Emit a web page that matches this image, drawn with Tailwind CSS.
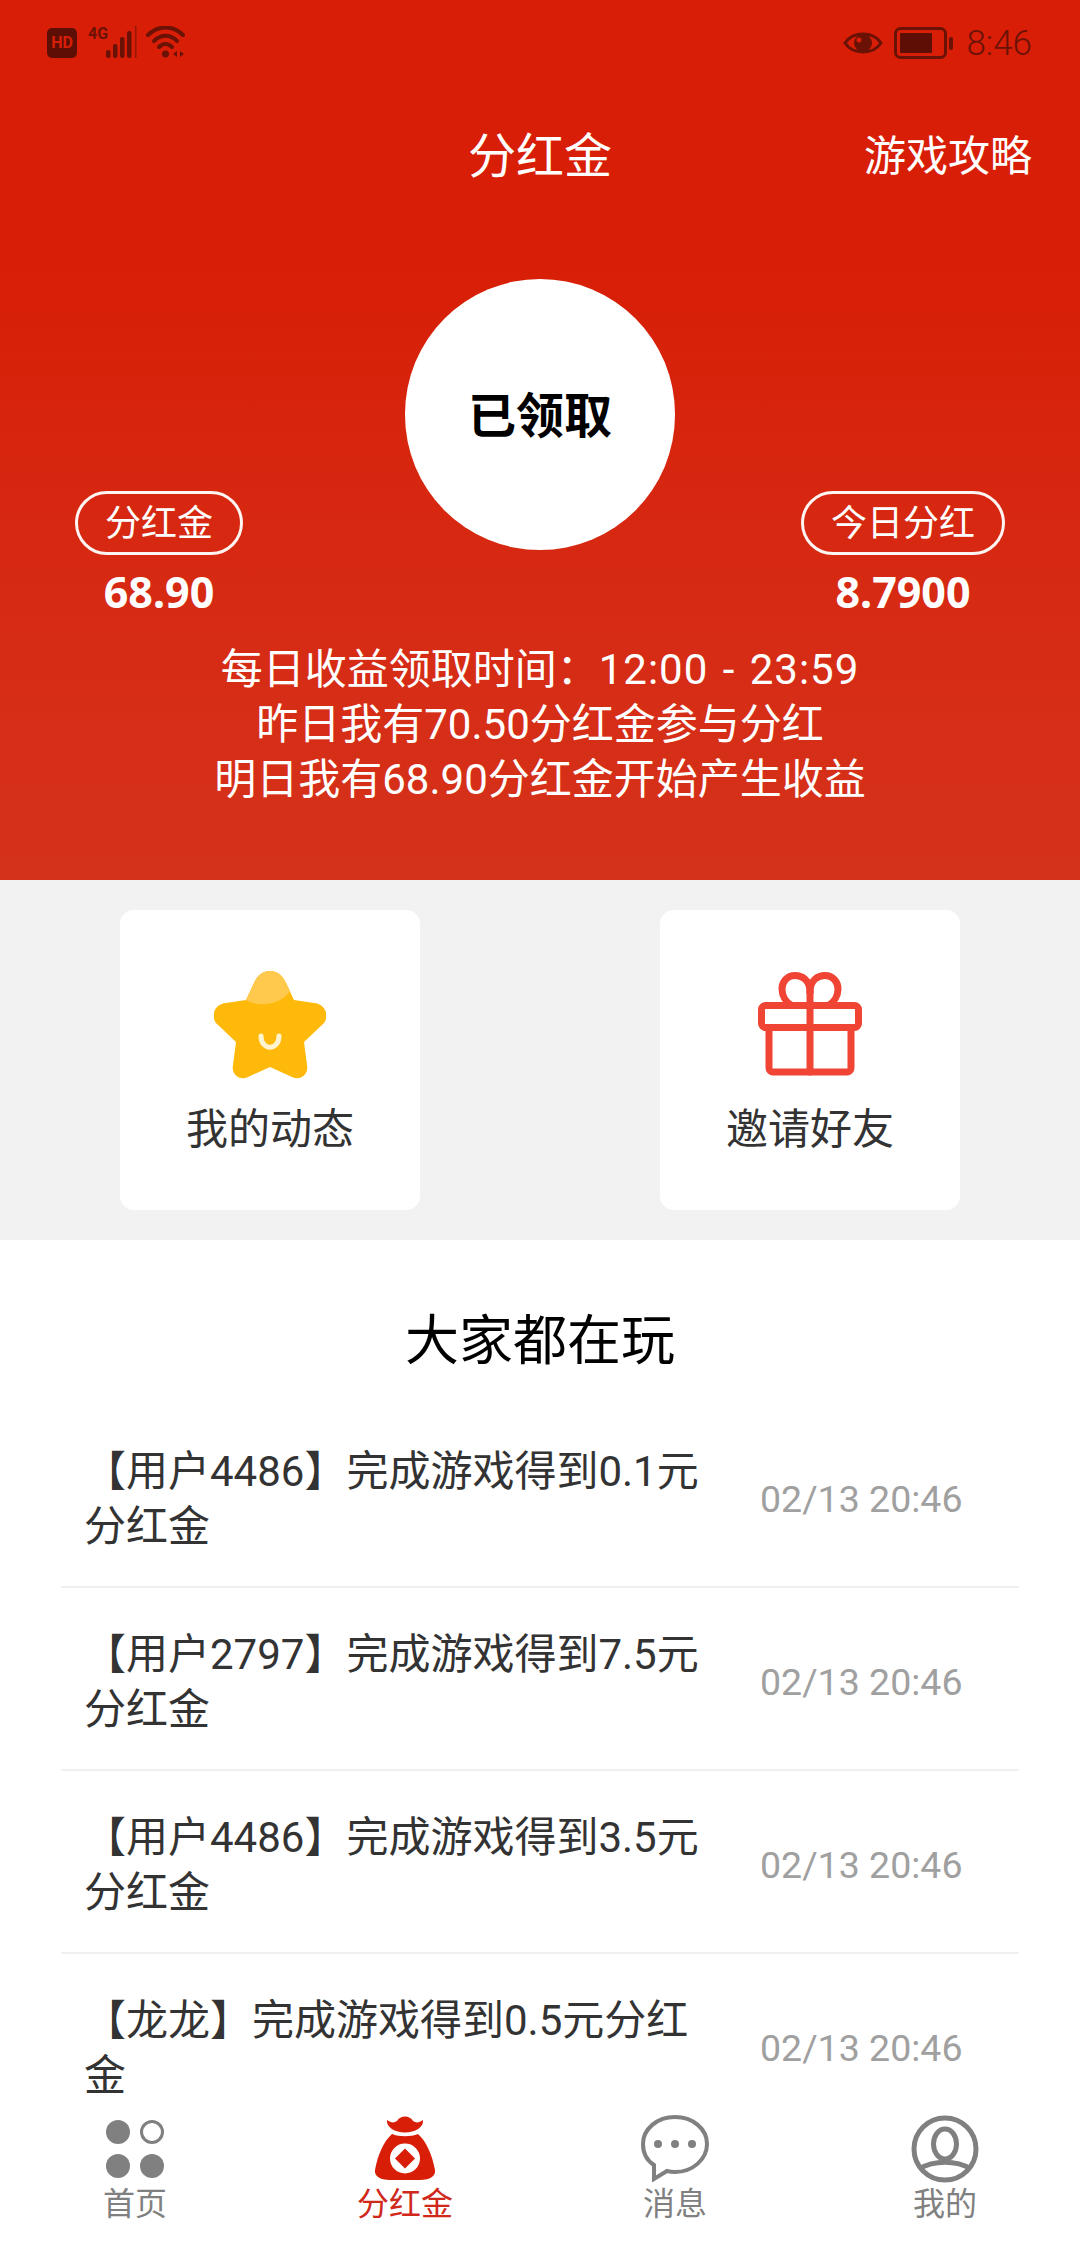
<!DOCTYPE html>
<html lang="zh-CN">
<head>
    <meta charset="UTF-8">
    <meta name="viewport" content="width=device-width, initial-scale=1.0">
    <title>分红金</title>
    <script src="https://cdn.jsdelivr.net/npm/@tailwindcss/browser@4"></script>
</head>
<body class="bg-white font-['Roboto','Noto_Sans_CJK_SC',sans-serif]">
<div class="flex flex-col h-screen overflow-hidden">

    <!-- Red header -->
    <div class="bg-gradient-to-b from-[#d81e06] from-30% to-[#d5321b] text-white pb-[73px]">
        <div class="flex items-center justify-between h-[80px] pt-[6px] pl-[47px] pr-[48px] text-[#6b1206]">
            <div class="flex items-center">
                <span class="flex items-center justify-center w-[30px] h-[30px] rounded-[5px] bg-[#5e0f05] text-[#d81e06] text-[16px] leading-[20px] font-bold">HD</span>
                <svg class="ml-[11px]" width="100" height="34" viewBox="0 0 100 34" fill="currentColor">
                    <text x="0" y="13" font-size="16" font-weight="700" font-family="Roboto">4G</text>
                    <rect x="18" y="24" width="4.5" height="8" rx="2"/>
                    <rect x="25" y="18" width="4.5" height="14" rx="2"/>
                    <rect x="32" y="11" width="4.5" height="21" rx="2"/>
                    <rect x="39" y="5" width="4.5" height="27" rx="2"/>
                    <rect x="47" y="0" width="1.5" height="32" opacity=".6"/>
                    <g fill="none" stroke="currentColor" stroke-width="4" stroke-linecap="round">
                        <path d="M60 9 C70 -1 85 -1 95 9"/>
                        <path d="M66 15 C73 8 82 8 89 15"/>
                        <path d="M71 21 C75 17 80 17 84 21"/>
                    </g>
                    <circle cx="77.5" cy="28" r="3.5"/>
                    <path d="M85 28 l4 -3 v6z M92 25 l4 3 -4 3z"/>
                </svg>
            </div>
            <div class="flex items-center">
                <svg width="40" height="24" viewBox="0 0 40 24">
                    <path d="M2 12 C10 0 30 0 38 12 C30 24 10 24 2 12Z" fill="none" stroke="currentColor" stroke-width="3"/>
                    <circle cx="20" cy="12" r="9" fill="currentColor"/>
                    <circle cx="16" cy="9" r="2.5" fill="#d81e06"/>
                </svg>
                <svg class="ml-[11px]" width="60" height="32" viewBox="0 0 60 32">
                    <rect x="1.5" y="1.5" width="50" height="29" rx="5" fill="none" stroke="currentColor" stroke-width="3"/>
                    <rect x="6" y="6" width="32" height="20" rx="1" fill="#5e0f05"/>
                    <rect x="55" y="10" width="4" height="13" rx="2" fill="currentColor"/>
                </svg>
                <span class="ml-[12px] text-[35px] leading-none font-light">8:46</span>
            </div>
        </div>

        <div class="grid grid-cols-[1fr_auto_1fr] items-center h-[150px] pt-[3px]">
            <div></div>
            <div class="text-[48px]">分红金</div>
            <div class="text-right text-[42px] pr-[48px]">游戏攻略</div>
        </div>

        <div class="grid grid-cols-[1fr_270px_1fr] mt-[49px] h-[361px]">
            <div class="pt-[212px] pl-[75px]">
                <div class="flex flex-col items-center w-[168px]">
                    <div class="flex items-center justify-center w-full h-[64px] pt-[2px] rounded-full border-[3px] border-[#fff5f2] text-[36px]">分红金</div>
                    <div class="mt-[7px] text-[43px] leading-[60px] font-bold font-['Noto_Sans']">68.90</div>
                </div>
            </div>
            <div class="flex items-center justify-center w-[270px] h-[271px] pt-[5px] rounded-full bg-white text-black text-[48px] font-bold">已领取</div>
            <div class="pt-[212px] pr-[75px] flex justify-end">
                <div class="flex flex-col items-center w-[204px]">
                    <div class="flex items-center justify-center w-full h-[64px] pt-[2px] rounded-full border-[3px] border-[#fff5f2] text-[36px]">今日分红</div>
                    <div class="mt-[7px] text-[43px] leading-[60px] font-bold font-['Noto_Sans']">8.7900</div>
                </div>
            </div>
        </div>

        <div class="mt-[2px] text-center text-[42px] leading-[55px]">
            <p>每日收益领取时间：<span class="tracking-[1px] [word-spacing:3px]">12:00 - 23:59</span></p>
            <p>昨日我有70.50分红金参与分红</p>
            <p>明日我有68.90分红金开始产生收益</p>
        </div>
    </div>

    <!-- Shortcut cards -->
    <div class="flex justify-between bg-[#f2f2f2] px-[120px] py-[30px]">
        <div class="flex flex-col items-center w-[300px] h-[300px] pt-[61px] rounded-[14px] bg-white">
            <svg width="112" height="108" viewBox="0 0 112 108">
                <path fill="#ffb90a" d="M56 0 C64 0 69 5 72 12 L80 29 L100 32 C112 33 116 46 109 53 L90 71 L93 94 C95 104 86 110 78 106 L56 96 L34 106 C26 110 17 104 19 94 L22 71 L3 53 C-4 46 0 33 12 32 L32 29 L40 12 C43 5 48 0 56 0Z"/>
                <path fill="#ffc94d" d="M32 29 L40 12 C43 5 48 0 56 0 C64 0 69 5 72 12 L76 20 C68 32 48 38 32 29Z"/>
                <path fill="none" stroke="#fff4d0" stroke-width="5" stroke-linecap="round" d="M47 65 C47 80 65 80 65 65"/>
            </svg>
            <div class="mt-[26px] text-[42px] leading-[50px] text-[#333]">我的动态</div>
        </div>
        <div class="flex flex-col items-center w-[300px] h-[300px] pt-[61px] rounded-[14px] bg-white">
            <svg width="104" height="108" viewBox="0 -1 104 108" fill="none" stroke="#f04535" stroke-width="7" stroke-linejoin="round" stroke-linecap="round">
                <rect x="3.5" y="33.5" width="97" height="22" rx="4"/>
                <path d="M11 56 V96 a4 4 0 0 0 4 4 H89 a4 4 0 0 0 4 -4 V56"/>
                <path d="M52 20 V100"/>
                <path d="M52 20 C52 8 44 3.5 37 3.5 C29 3.5 24 10 24 17 C24 24 28 30 33 33"/>
                <path d="M52 20 C52 8 60 3.5 67 3.5 C75 3.5 80 10 80 17 C80 24 76 30 71 33"/>
            </svg>
            <div class="mt-[26px] text-[42px] leading-[50px] text-[#333]">邀请好友</div>
        </div>
    </div>

    <!-- Activity list -->
    <div class="flex-1 min-h-0 overflow-hidden">
        <div class="h-[165px] pt-[64px] text-center text-[54px] leading-[76px] text-black">大家都在玩</div>
        <div class="mx-[61px]">
            <div class="flex items-center h-[183px] pt-[7px] pl-[23px] border-b-2 border-[#f0f0f0]">
                <div class="w-[630px] text-[42px] leading-[55px] text-[#333]">【用户4486】完成游戏得到0.1元分红金</div>
                <div class="ml-[46px] text-[37.5px] text-[#a0a0a0]">02/13 20:46</div>
            </div>
            <div class="flex items-center h-[183px] pt-[7px] pl-[23px] border-b-2 border-[#f0f0f0]">
                <div class="w-[630px] text-[42px] leading-[55px] text-[#333]">【用户2797】完成游戏得到7.5元分红金</div>
                <div class="ml-[46px] text-[37.5px] text-[#a0a0a0]">02/13 20:46</div>
            </div>
            <div class="flex items-center h-[183px] pt-[7px] pl-[23px] border-b-2 border-[#f0f0f0]">
                <div class="w-[630px] text-[42px] leading-[55px] text-[#333]">【用户4486】完成游戏得到3.5元分红金</div>
                <div class="ml-[46px] text-[37.5px] text-[#a0a0a0]">02/13 20:46</div>
            </div>
            <div class="flex items-center h-[183px] pt-[7px] pl-[23px] border-b-2 border-[#f0f0f0]">
                <div class="w-[630px] text-[42px] leading-[55px] text-[#333]">【龙龙】完成游戏得到0.5元分红金</div>
                <div class="ml-[46px] text-[37.5px] text-[#a0a0a0]">02/13 20:46</div>
            </div>
        </div>
    </div>

    <!-- Bottom tabs -->
    <div class="grid grid-cols-4 h-[149px] pt-[19px] bg-white text-[32px] leading-[38px] text-[#808080]">
        <div class="flex flex-col items-center">
            <svg width="70" height="70" viewBox="0 0 70 70" fill="#808080">
                <circle cx="18" cy="18" r="12"/>
                <circle cx="52" cy="18" r="10.5" fill="none" stroke="#808080" stroke-width="3"/>
                <circle cx="18" cy="52" r="12"/>
                <circle cx="52" cy="52" r="12"/>
            </svg>
            <span class="mt-px">首页</span>
        </div>
        <div class="flex flex-col items-center text-[#d0281a]">
            <svg width="70" height="70" viewBox="0 0 70 70" fill="#d81e06">
                <path d="M17 6 C21 9 24 9 27 7 C30 1 40 1 43 7 C46 9 49 9 53 6 C54 13 45 18.5 35 18.5 C25 18.5 16 13 17 6Z"/>
                <path d="M22 20 C29 23 41 23 48 20 C56 27 62 40 65 56 C66 62 60 66 50 66 H20 C10 66 4 62 5 56 C8 40 14 27 22 20Z"/>
                <circle cx="35" cy="44.5" r="15" fill="#fff"/>
                <path d="M35 34.5 L45 44.5 L35 54.5 L25 44.5Z"/>
            </svg>
            <span class="mt-px">分红金</span>
        </div>
        <div class="flex flex-col items-center">
            <svg width="70" height="70" viewBox="0 0 70 70" fill="none" stroke="#808080" stroke-width="4">
                <path d="M14 51 C6 46 3 38 3 30 C3 15 17 3 35 3 C53 3 67 15 67 30 C67 45 53 58 35 58 C32 58 29 57.5 27 57 L14 65Z"/>
                <g fill="#808080" stroke="none">
                    <circle cx="18" cy="30" r="4"/>
                    <circle cx="35" cy="30" r="4"/>
                    <circle cx="52" cy="30" r="4"/>
                </g>
            </svg>
            <span class="mt-px">消息</span>
        </div>
        <div class="flex flex-col items-center">
            <svg width="70" height="70" viewBox="0 0 70 70" fill="none" stroke="#808080" stroke-width="5">
                <circle cx="35" cy="35" r="31"/>
                <ellipse cx="35" cy="30" rx="11.5" ry="15"/>
                <path d="M9 55 C24 46 46 46 61 55"/>
            </svg>
            <span class="mt-px">我的</span>
        </div>
    </div>
</div>
</body>
</html>
